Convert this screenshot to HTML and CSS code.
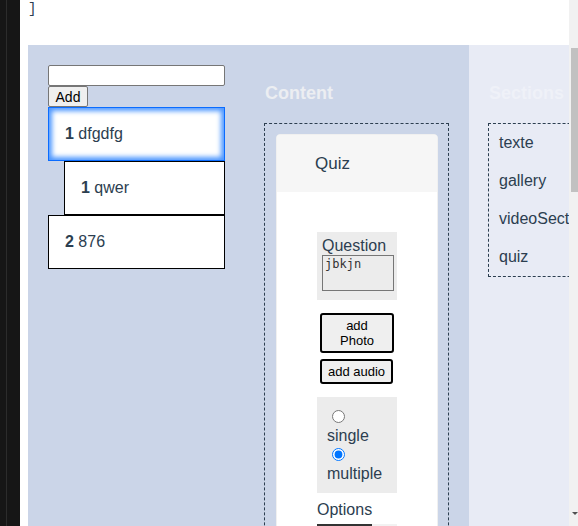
FILE: index.html
```html
<!DOCTYPE html>
<html>
<head>
<meta charset="utf-8">
<link rel="stylesheet" href="styles.css">
</head>
<body>
<div class="dock"><div class="dock-line"></div></div>
<div class="page">
  <div class="topline">]</div>
  <div class="app">
    <div class="col-tree">
      <input class="new-input" type="text">
      <button class="add-btn">Add</button>
      <div class="item focused"><b>1</b> dfgdfg</div>
      <div class="item nested"><b>1</b> qwer</div>
      <div class="item"><b>2</b> 876</div>
    </div>
    <div class="col-content">
      <h2 class="col-title">Content</h2>
      <div class="dropzone">
        <div class="card">
          <div class="card-head">Quiz</div>
          <div class="card-body">
            <div class="question">
              <div class="q-label">Question</div>
              <textarea class="q-text">jbkjn</textarea>
            </div>
            <button class="media-btn photo">add Photo</button>
            <button class="media-btn audio">add audio</button>
            <div class="mode">
              <input class="radio" type="radio" name="mode">
              <div class="mode-label">single</div>
              <input class="radio second" type="radio" name="mode" checked>
              <div class="mode-label">multiple</div>
            </div>
            <div class="opt-title">Options</div>
            <div class="opt-bar"><span class="opt-dark"></span><span class="opt-light"></span></div>
            <div class="opt-rest"></div>
          </div>
        </div>
      </div>
    </div>
    <div class="col-sections">
      <h2 class="col-title">Sections</h2>
      <div class="sec-box">
        <div class="sec-item">texte</div>
        <div class="sec-item">gallery</div>
        <div class="sec-item">videoSection</div>
        <div class="sec-item">quiz</div>
      </div>
    </div>
  </div>
</div>
<div class="scrollbar">
  <div class="thumb"></div>
  <div class="arrow"></div>
</div>
</body>
</html>
```

FILE: styles.css
```css
html, body {
  margin: 0;
  padding: 0;
  height: 526px;
  overflow: hidden;
}
body {
  display: flex;
  background: #ffffff;
  font-family: "Liberation Sans", Arial, sans-serif;
  color: #2c3e50;
}
.dock {
  width: 20px;
  flex: none;
  background: #161616;
  display: flex;
}
.dock-line {
  width: 1px;
  margin-left: 6px;
  background: #2c2c2c;
}
.page {
  flex: 1;
  min-width: 0;
  overflow: hidden;
  padding-left: 8px;
  display: flex;
  flex-direction: column;
}
.topline {
  height: 45px;
  flex: none;
  font-family: "Liberation Mono", "DejaVu Sans Mono", monospace;
  font-size: 14px;
  line-height: 16px;
  padding-top: 1px;
  padding-left: 0;
  box-sizing: border-box;
  color: #2c3e50;
}
.app {
  flex: 1;
  width: 660px;
  display: grid;
  grid-template-columns: 216px 225px 219px;
  background: #cbd5e8;
}
.col-tree {
  padding: 20px;
}
.new-input {
  display: block;
  width: 177px;
  height: 21px;
  box-sizing: border-box;
  border: 1px solid #767676;
  border-radius: 2px;
  padding: 0 2px;
  margin: 0;
  background: #fff;
}
.add-btn {
  display: block;
  width: 40px;
  height: 21px;
  margin: 0;
  padding: 0;
  box-sizing: border-box;
  border: 1px solid #767676;
  border-radius: 2px;
  background: #efefef;
  font-family: "Liberation Sans", Arial, sans-serif;
  font-size: 14px;
  color: #000;
}
.item {
  width: 177px;
  box-sizing: border-box;
  border: 1px solid #000;
  background: #fff;
  padding: 16px 16px;
  font-size: 16px;
  line-height: 20px;
}
.item.nested {
  margin-left: 16px;
  width: 161px;
}
.item.focused {
  border-color: #0a6cff;
  box-shadow: inset 0 0 5px 3px #4d97ff;
}
.col-content {
  padding: 20px 20px 0 20px;
}
.col-title {
  margin: 18px 0 20px 0;
  padding-left: 1px;
  font-size: 18px;
  line-height: 20px;
  font-weight: bold;
  color: #eceef2;
}
.col-sections .col-title {
  color: #eff1f8;
}
.dropzone {
  border: 1px dashed #2c3e50;
  padding: 10px 10px 10px 11px;
  height: 600px;
}
.card {
  border: 1px solid #f0f0f0;
  border-radius: 4px;
  background: #fff;
  overflow: hidden;
}
.card-head {
  background: #f6f6f6;
  height: 57px;
  display: flex;
  align-items: center;
  padding-left: 38px;
  font-size: 17px;
}
.card-body {
  padding: 40px 40px;
}
.question {
  background: #ececec;
  padding: 4px 5px 9px 5px;
}
.q-label {
  font-size: 16px;
  line-height: 19px;
}
.q-text {
  display: block;
  width: 72px;
  height: 36px;
  box-sizing: border-box;
  margin: 0;
  padding: 1px 2px;
  border: 1px solid #767676;
  resize: none;
  font-family: "DejaVu Sans Mono", "Liberation Mono", monospace;
  font-size: 12px;
  color: #333;
  background: #ececec;
}
.media-btn {
  display: block;
  width: 74px;
  margin: 0 0 0 3px;
  padding: 3px 4px;
  box-sizing: border-box;
  border: 2px solid #000;
  border-radius: 3px;
  background: #efefef;
  font-family: "Liberation Sans", Arial, sans-serif;
  font-size: 13px;
  line-height: 15px;
  color: #000;
}
.media-btn.photo {
  margin-top: 13px;
  padding-left: 14px;
  padding-right: 14px;
}
.media-btn.audio {
  margin-top: 6px;
  width: 73px;
  padding-left: 2px;
  padding-right: 2px;
}
.mode {
  margin-top: 13px;
  background: #ececec;
  padding: 10px 10px 10px 10px;
}
.radio {
  display: block;
  width: 13px;
  height: 13px;
  margin: 3px 0 0 5px;
}
.radio.second {
  margin-top: 3px;
}
.mode-label {
  font-size: 16px;
  line-height: 18px;
  margin-top: 4px;
}
.opt-title {
  margin-top: 7px;
  font-size: 16px;
  line-height: 19px;
}
.opt-bar {
  display: flex;
  margin-top: 5px;
  height: 3px;
}
.opt-dark {
  width: 55px;
  background: #333;
}
.opt-light {
  width: 25px;
  background: #f2f2f2;
}
.opt-rest {
  height: 40px;
  background: #f7f7f7;
  width: 80px;
}
.col-sections {
  background: #e8ebf5;
  padding: 20px 19px;
}
.sec-box {
  border: 1px dashed #2c3e50;
  width: 160px;
}
.sec-item {
  padding: 9px 10px;
  font-size: 16px;
  line-height: 20px;
  white-space: nowrap;
}
.scrollbar {
  width: 9px;
  flex: none;
  background: #f1f1f1;
  display: flex;
  flex-direction: column;
}
.thumb {
  margin-top: 48px;
  margin-left: 2px;
  width: 7px;
  height: 144px;
  background: #c1c1c1;
}
.arrow {
  margin-top: auto;
  margin-bottom: 11px;
  margin-left: 3px;
  width: 0;
  height: 0;
  border-left: 3px solid transparent;
  border-right: 3px solid transparent;
  border-top: 3px solid #505050;
}
```
